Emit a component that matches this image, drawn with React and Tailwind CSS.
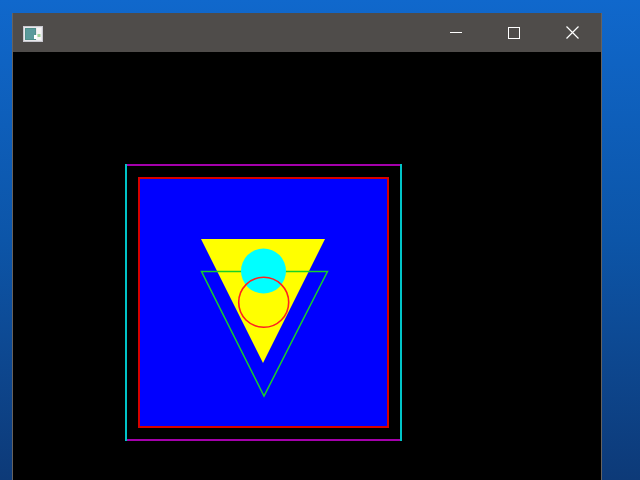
import React from 'react'

const AppIcon = () => (
  <svg width="20" height="16" viewBox="0 0 20 16">
    <rect x="0.5" y="0.5" width="19" height="15" fill="#e8e8ec" stroke="#c9c9d0" />
    <rect x="2" y="2" width="11" height="12" fill="#4f8f8a" />
    <rect x="3" y="3" width="9" height="10" fill="#5a9a9c" />
    <rect x="14" y="2" width="4" height="12" fill="#f4f4f4" />
    <rect x="14.5" y="8" width="3" height="3" fill="#9fd39a" />
    <rect x="11" y="9" width="3" height="4" fill="#ffffff" />
  </svg>
)

const TitleButton = ({ children }) => (
  <div className="w-[58px] h-full flex items-center justify-center">{children}</div>
)

const Scene = () => (
  <svg width="588" height="428" className="block">
    {/* outer frame */}
    <rect x="112" y="112" width="277" height="2" fill="#a400ac" shapeRendering="crispEdges" />
    <rect x="112" y="387" width="277" height="2" fill="#a400ac" shapeRendering="crispEdges" />
    <rect x="112" y="112" width="2" height="277" fill="#00c4c8" shapeRendering="crispEdges" />
    <rect x="387" y="112" width="2" height="277" fill="#00c4c8" shapeRendering="crispEdges" />
    {/* filled square */}
    <rect x="125" y="125" width="251" height="251" fill="#d80000" shapeRendering="crispEdges" />
    <rect x="127" y="127" width="247" height="247" fill="#0000ff" shapeRendering="crispEdges" />
    {/* triangles and circles */}
    <polygon points="188,187 312,187 250,311" fill="#ffff00" />
    <polygon points="188.5,219.5 314.5,219.5 251,344" fill="none" stroke="#18d028" strokeWidth="1.5" />
    <circle cx="250.5" cy="219" r="22.5" fill="#00ffff" />
    <circle cx="250.7" cy="250.3" r="25" fill="none" stroke="#ff2020" strokeWidth="1.6" />
  </svg>
)

export default function App() {
  return (
    <div className="w-[640px] h-[480px] overflow-hidden bg-linear-to-b from-[#1068cc] via-[#0c55a8] to-[#0d3a78] pt-[13px] pl-[12px]">
      <div className="w-[590px] h-[467px] flex flex-col border-x border-[#66625f] bg-black">
        <div className="h-[39px] bg-[#4f4c4a] flex items-center">
          <div className="ml-[10px] mt-[2px]">
            <AppIcon />
          </div>
          <div className="flex-1" />
          <div className="flex h-full">
            <TitleButton>
              <div className="w-[12px] h-[1px] bg-white" />
            </TitleButton>
            <TitleButton>
              <div className="w-[12px] h-[12px] border border-white" />
            </TitleButton>
            <TitleButton>
              <svg width="13" height="13" viewBox="0 0 13 13">
                <path d="M0.5 0.5 L12.5 12.5 M12.5 0.5 L0.5 12.5" stroke="#ffffff" strokeWidth="1.2" />
              </svg>
            </TitleButton>
          </div>
        </div>
        <div className="flex-1 bg-black overflow-hidden">
          <Scene />
        </div>
      </div>
    </div>
  )
}
